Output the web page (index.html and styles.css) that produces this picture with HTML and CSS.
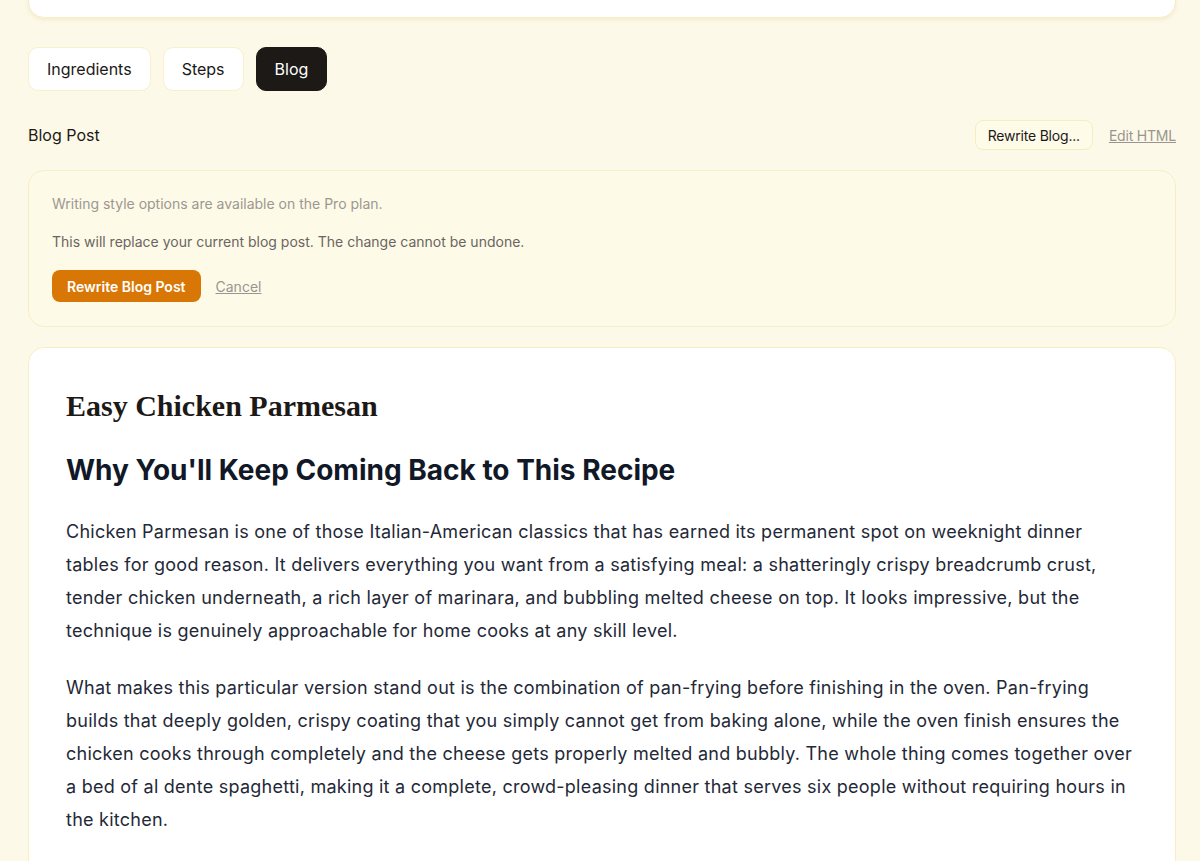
FILE: index.html
```html
<!DOCTYPE html>
<html lang="en">
<head>
<meta charset="utf-8">
<title>Blog Post</title>
<link rel="stylesheet" href="styles.css">
</head>
<body>
<div class="page">
  <div class="top-card"></div>

  <nav class="tabs">
    <button class="tab">Ingredients</button>
    <button class="tab">Steps</button>
    <button class="tab active">Blog</button>
  </nav>

  <div class="section-head">
    <span class="section-title">Blog Post</span>
    <div class="section-actions">
      <button class="btn-outline">Rewrite Blog...</button>
      <a class="link" href="#">Edit HTML</a>
    </div>
  </div>

  <div class="notice">
    <p class="notice-muted">Writing style options are available on the Pro plan.</p>
    <p class="notice-text">This will replace your current blog post. The change cannot be undone.</p>
    <div class="notice-actions">
      <button class="btn-primary">Rewrite Blog Post</button>
      <a class="link cancel" href="#">Cancel</a>
    </div>
  </div>

  <article class="article">
    <h1 class="title">Easy Chicken Parmesan</h1>
    <h2 class="subtitle">Why You'll Keep Coming Back to This Recipe</h2>
    <p>Chicken Parmesan is one of those Italian-American classics that has earned its permanent spot on weeknight dinner tables for good reason. It delivers everything you want from a satisfying meal: a shatteringly crispy breadcrumb crust, tender chicken underneath, a rich layer of marinara, and bubbling melted cheese on top. It looks impressive, but the technique is genuinely approachable for home cooks at any skill level.</p>
    <p>What makes this particular version stand out is the combination of pan-frying before finishing in the oven. Pan-frying builds that deeply golden, crispy coating that you simply cannot get from baking alone, while the oven finish ensures the chicken cooks through completely and the cheese gets properly melted and bubbly. The whole thing comes together over a bed of al dente spaghetti, making it a complete, crowd-pleasing dinner that serves six people without requiring hours in the kitchen.</p>
  </article>
</div>
</body>
</html>
```

FILE: styles.css
```css
* { box-sizing: border-box; }
html, body { margin: 0; padding: 0; }
body {
  background: #fdf9e8;
  font-family: "Inter", "Open Sans", sans-serif;
  color: #1c1917;
  overflow: hidden;
}
.page {
  padding: 0 24px 0 28px;
}
.top-card {
  height: 58px;
  margin-top: -40px;
  background: #ffffff;
  border: 1px solid #f7edc6;
  border-radius: 16px;
  box-shadow: 0 2px 4px rgba(200, 180, 100, 0.18);
}
.tabs {
  display: flex;
  gap: 12px;
  margin-top: 29px;
}
.tab {
  height: 44px;
  padding: 0 18px;
  border: 1px solid #f8efcc;
  background: #ffffff;
  border-radius: 10px;
  font-family: inherit;
  font-size: 16px;
  color: #1c1917;
}
.tab.active {
  background: #1c1917;
  border-color: #1c1917;
  color: #ffffff;
}
.section-head {
  display: flex;
  justify-content: space-between;
  align-items: center;
  margin-top: 30px;
  height: 28px;
}
.section-title {
  font-size: 16px;
  color: #1c1917;
}
.section-actions {
  display: flex;
  align-items: center;
  gap: 16px;
}
.btn-outline {
  height: 30px;
  padding: 0 12px;
  background: #fffbe9;
  border: 1px solid #f8edbf;
  border-radius: 8px;
  font-family: inherit;
  font-size: 14px;
  color: #1c1917;
  letter-spacing: -0.2px;
}
.link {
  font-size: 14px;
  color: #9a9590;
  text-decoration: underline;
}
.section-actions .link {
  letter-spacing: -0.2px;
}
.notice {
  margin-top: 21px;
  background: #fefae8;
  border: 1px solid #f8eec4;
  border-radius: 16px;
  padding: 23px 23px 24px;
}
.notice p {
  margin: 0;
  font-size: 14px;
  line-height: 20px;
}
.notice-muted { color: #9c9890; }
.notice-text { color: #6b6560; margin-top: 18px !important; }
.notice-actions {
  display: flex;
  align-items: center;
  gap: 15px;
  margin-top: 18px;
}
.btn-primary {
  height: 32px;
  padding: 0 15px;
  background: #d97706;
  border: none;
  border-radius: 8px;
  font-family: inherit;
  font-size: 14px;
  font-weight: 600;
  color: #ffffff;
}
.article {
  margin-top: 20px;
  background: #ffffff;
  border: 1px solid #f8eec4;
  border-radius: 16px;
  padding: 38px 37px 40px;
  min-height: 600px;
}
.title {
  margin: 0;
  font-family: "Liberation Serif", "DejaVu Serif", serif;
  font-weight: 700;
  font-size: 30px;
  line-height: 40px;
  color: #1c1917;
}
.subtitle {
  margin: 24px 0 0;
  font-size: 28px;
  font-weight: 700;
  line-height: 40px;
  color: #111827;
}
.article p {
  margin: 24px 0 0;
  font-size: 18px;
  line-height: 33px;
  color: #1f2937;
  letter-spacing: 0.25px;
}
.article .subtitle + p {
  margin-top: 25px;
}
```
